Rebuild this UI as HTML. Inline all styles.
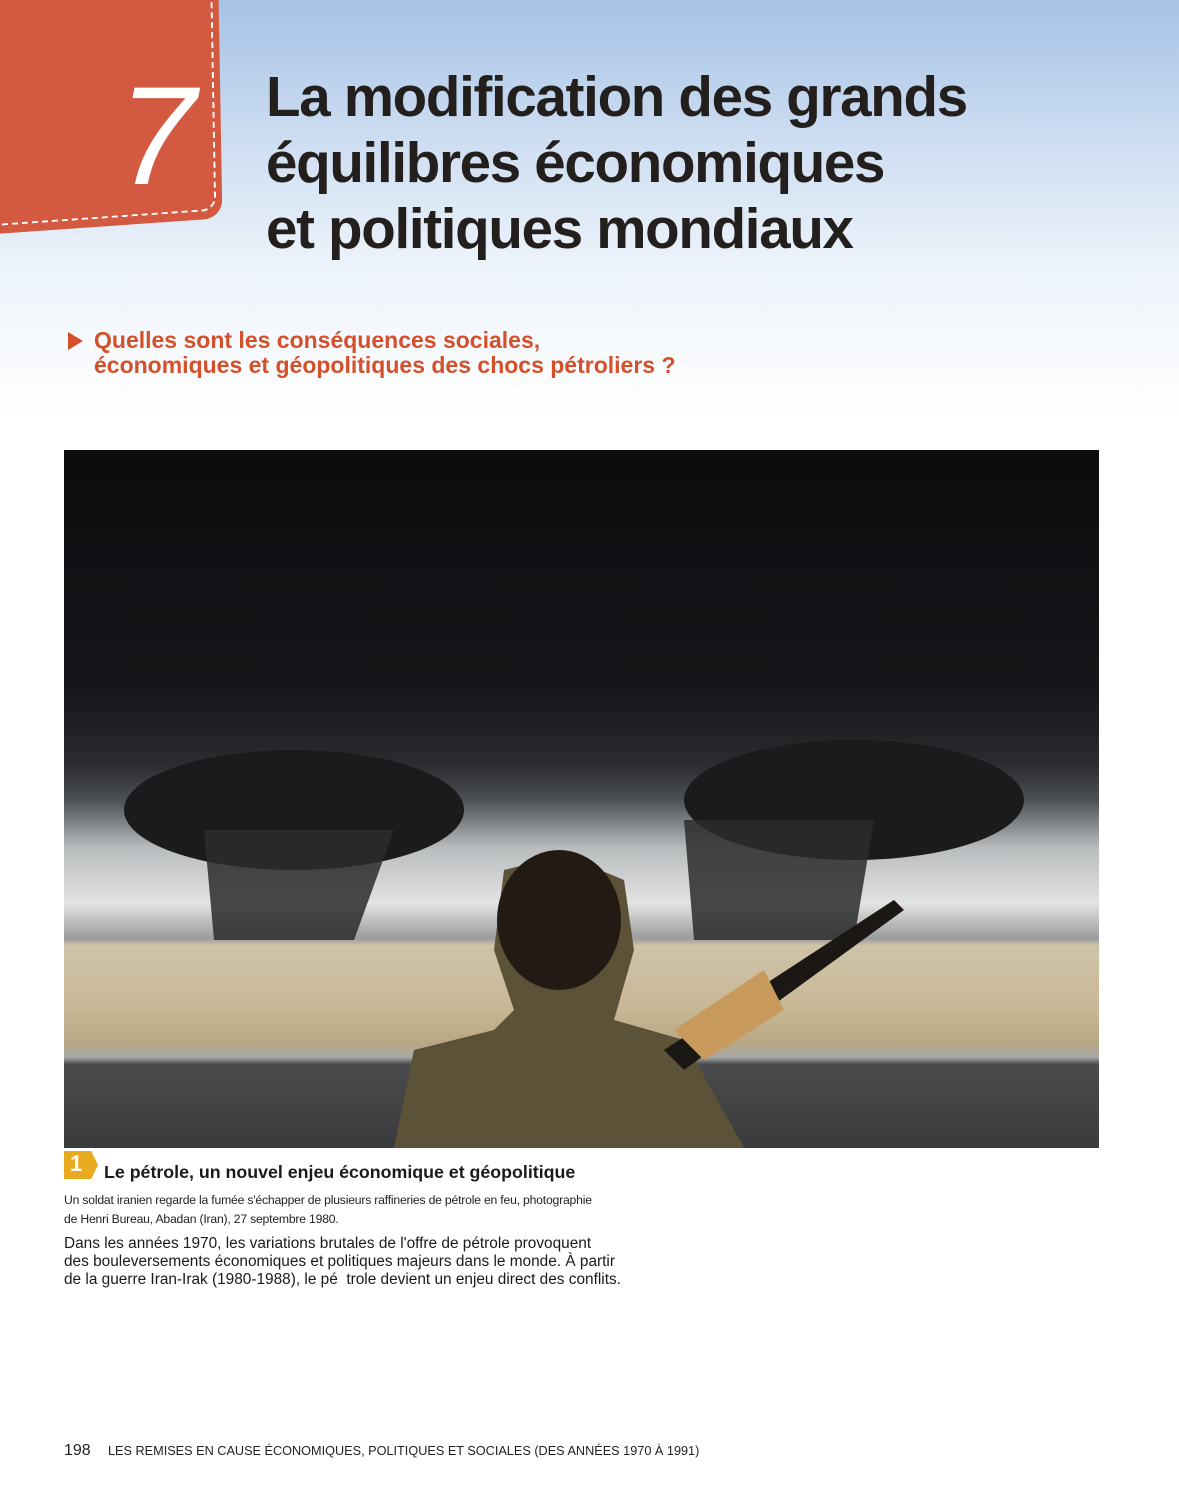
<!DOCTYPE html>
<html><head><meta charset="utf-8"><style>
body{margin:0;width:1179px;height:1500px;position:relative;font-family:"Liberation Sans",sans-serif;background:#fff;overflow:hidden}
.bg{position:absolute;left:0;top:0;width:1179px;height:420px;background:linear-gradient(#a6c2e6 0%,#cfdff2 35%,#eef4fb 65%,#fff 100%)}
.tag{position:absolute;left:-20px;top:-20px;width:238px;height:255px;background:#d35a40;border-radius:0 0 18px 0;transform:skewY(-3deg) rotate(-1deg);transform-origin:0 0}
.dash{position:absolute;left:-20px;top:-20px;width:230px;height:245px;border-right:2px dashed #fff;border-bottom:2px dashed #fff;border-radius:0 0 14px 0;transform:skewY(-3deg) rotate(-1deg);transform-origin:0 0}
.num{position:absolute;left:118px;top:55px;font-size:140px;color:#fff;font-family:"Liberation Sans",sans-serif;font-style:italic}
h1{position:absolute;left:266px;top:64px;margin:0;font-size:56.5px;line-height:66px;color:#231f1c;font-family:"Liberation Sans",sans-serif;font-weight:bold;letter-spacing:-1.3px}
.q{position:absolute;left:94px;top:328px;color:#d4502a;font-weight:bold;font-size:23px;line-height:25px;font-family:"Liberation Sans",sans-serif}
.tri{position:absolute;left:68px;top:332px;width:0;height:0;border-left:15px solid #d4502a;border-top:9px solid transparent;border-bottom:9px solid transparent}
.photo{position:absolute;left:64px;top:450px;width:1035px;height:698px;overflow:hidden;background:linear-gradient(#0b0c0e 0%,#15171a 35%,#2a2c2f 45%,#4b4e52 50%,#b9bcbe 57%,#e2e3e3 65%,#9a9b9c 70%,#cfc3a8 71%,#c9b896 80%,#b8a784 85%,#a7a8a6 87%,#4a4b4d 88%,#3a3b3d 100%)}
</style></head><body>
<div class="bg"></div>
<div class="tag"></div>
<div class="dash"></div>
<div class="num">7</div>
<h1>La modification des grands<br>équilibres économiques<br>et politiques mondiaux</h1>
<div class="tri"></div>
<div class="q">Quelles sont les conséquences sociales,<br>économiques et géopolitiques des chocs pétroliers ?</div>
<div class="photo">
<svg width="1035" height="698" style="position:absolute;left:0;top:0">
<ellipse cx="230" cy="360" rx="170" ry="60" fill="#1a1b1d"/>
<path d="M140 380 L330 380 L290 490 L150 490Z" fill="#2a2b2d" opacity=".85"/>
<ellipse cx="790" cy="350" rx="170" ry="60" fill="#1a1b1d"/>
<path d="M620 370 L810 370 L790 490 L630 490Z" fill="#2a2b2d" opacity=".85"/>
<path d="M330 698 L350 600 L430 580 L450 560 L430 500 L440 420 L500 405 L560 430 L570 500 L550 570 L620 590 L680 698Z" fill="#5c5238"/>
<ellipse cx="495" cy="470" rx="62" ry="70" fill="#231a14"/>
<path d="M600 600 L830 450 L840 460 L620 620Z" fill="#1a1714"/>
<path d="M610 580 L700 520 L720 560 L640 610Z" fill="#c89a5c"/>
</svg>
</div>
<div style="position:absolute;left:64px;top:1151px;width:34px;height:28px;background:#e8aa1f;clip-path:polygon(0 0,80% 0,100% 50%,80% 100%,0 100%)"></div>
<div style="position:absolute;left:70px;top:1151px;color:#fff;font-weight:bold;font-size:22px">1</div>
<div style="position:absolute;left:104px;top:1162px;font-weight:bold;font-size:17.8px;color:#1a1a1a">Le pétrole, un nouvel enjeu économique et géopolitique</div>
<div style="position:absolute;left:64px;top:1191px;font-size:12.2px;line-height:19px;color:#222;letter-spacing:-0.2px">Un soldat iranien regarde la fumée s'échapper de plusieurs raffineries de pétrole en feu, photographie<br>de Henri Bureau, Abadan (Iran), 27 septembre 1980.</div>
<div style="position:absolute;left:64px;top:1235px;font-size:15.4px;line-height:18px;color:#1a1a1a">Dans les années 1970, les variations brutales de l'offre de pétrole provoquent<br>des bouleversements économiques et politiques majeurs dans le monde. À partir<br>de la guerre Iran-Irak (1980-1988), le pé&nbsp; trole devient un enjeu direct des conflits.</div>
<div style="position:absolute;left:64px;top:1442px;font-size:16px;color:#222">198</div>
<div style="position:absolute;left:108px;top:1444px;font-size:12.7px;color:#222">LES REMISES EN CAUSE ÉCONOMIQUES, POLITIQUES ET SOCIALES (DES ANNÉES 1970 À 1991)</div>
</body></html>
